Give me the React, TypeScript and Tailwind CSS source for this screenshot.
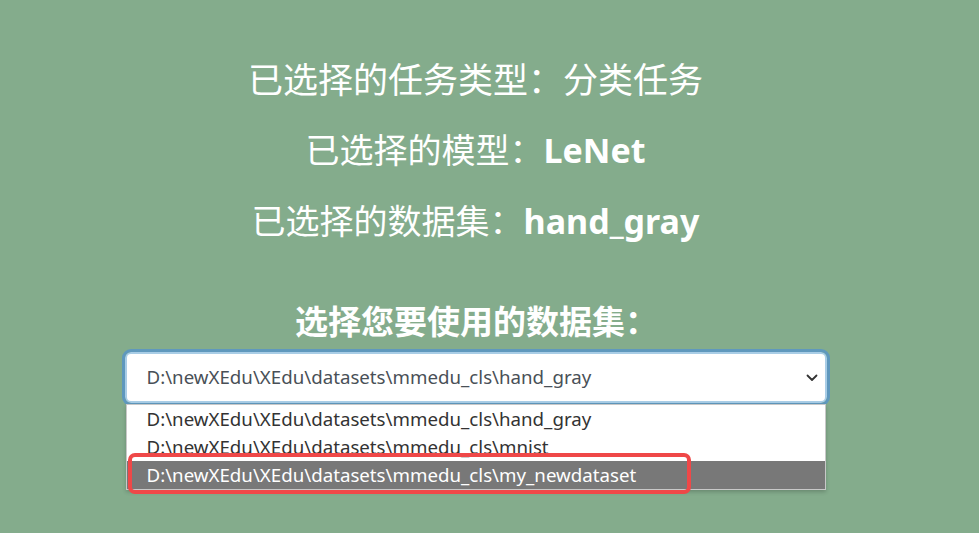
import React from 'react';

const datasets = [
  'D:\\newXEdu\\XEdu\\datasets\\mmedu_cls\\hand_gray',
  'D:\\newXEdu\\XEdu\\datasets\\mmedu_cls\\mnist',
  'D:\\newXEdu\\XEdu\\datasets\\mmedu_cls\\my_newdataset',
];

const font = { fontFamily: '"Noto Sans", "Noto Sans CJK SC", sans-serif' };

export default function App() {
  return (
    <div className="h-[533px] w-[979px] overflow-hidden bg-[#84ac8c] text-white" style={font}>
      <div className="flex w-[951px] flex-col items-center pt-[44px]">
        <div className="text-[35px] leading-[71px]">已选择的任务类型：分类任务</div>
        <div className="text-[34px] leading-[71px]">
          已选择的模型：<span className="font-bold">LeNet</span>
        </div>
        <div className="text-[34px] leading-[71px]">
          已选择的数据集：<span className="font-bold">hand_gray</span>
        </div>

        <div className="mt-[44px] pl-[2px] text-[33px] font-bold leading-[42px]">选择您要使用的数据集：</div>

        {/* 选择框 + 展开的下拉列表 */}
        <div className="relative mt-[9px] w-[702px]">
          <div className="flex h-[51px] items-center justify-between rounded-[6px] border-2 border-[#a9cde6] bg-white pl-[20px] pr-[7px] outline-[3px] outline-solid outline-[#5f98bd]">
            <span className="text-[18.7px] text-[#495057]">{datasets[0]}</span>
            <svg width="12" height="8" viewBox="0 0 12 8" fill="none">
              <path d="M1.5 1.5 6 6l4.5-4.5" stroke="#333" strokeWidth="1.8" strokeLinecap="round" strokeLinejoin="round" />
            </svg>
          </div>

          <div className="absolute left-[1px] right-[1px] top-[52px] border border-[#c8c8c8] bg-white shadow-[0_2px_4px_rgba(0,0,0,0.2)]">
            {datasets.map((d, i) => (
              <div
                key={d}
                className={
                  i === 2
                    ? 'flex h-[28px] items-center bg-[#787878] pl-[20px] text-[18.7px] text-white'
                    : 'flex h-[28px] items-center pl-[20px] text-[18.7px] text-[#333]'
                }
              >
                {d}
              </div>
            ))}
            {/* 红色标注框 */}
            <div className="absolute left-[1px] top-[48px] h-[41px] w-[563px] rounded-[7px] border-[4px] border-[#ef4848]" />
          </div>
        </div>
      </div>
    </div>
  );
}
